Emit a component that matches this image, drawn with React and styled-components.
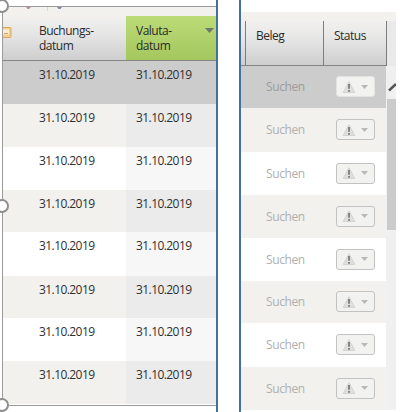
import React from 'react';
import styled, {createGlobalStyle} from 'styled-components';

const GlobalStyle = createGlobalStyle`
    * {
        box-sizing: border-box;
    }

    body {
        margin: 0;
        background: #fff;
        font-family: 'Open Sans', 'Noto Sans', sans-serif;
        font-size: 12px;
        color: #303030;
    }
`;

const Page = styled.main`
    display: flex;
    width: 400px;
    height: 412px;
    overflow: hidden;
`;

const LeftPane = styled.section`
    position: relative;
    width: 218px;
    height: 412px;
    padding: 6px 0 0 2px;
    border-right: 2px solid #41719c;
`;

const Selection = styled.div`
    height: 400px;
    overflow: hidden;
    border: solid #9b9b9b;
    border-width: 1px 0 1px 1px;
`;

const Handle = styled.span`
    position: absolute;
    left: -5px;
    top: ${({$top}) => $top}px;
    width: 14px;
    height: 14px;
    border: 2px solid #8f8f8f;
    border-radius: 50%;
    background: #fff;
`;

const Toolbar = styled.div`
    height: 9px;
    padding-left: 22px;
    background: #f2f1ee;

    svg {
        display: block;
    }
`;

const HeaderRow = styled.div`
    display: flex;
    width: ${({$width}) => ($width ? `${$width}px` : 'auto')};
    height: 45px;
    border-bottom: 1px solid #858585;
    background: linear-gradient(#f2f1f0, #e4e4e4 45%, #cecece);
`;

const HeaderCell = styled.div`
    display: flex;
    flex-shrink: 0;
    justify-content: space-between;
    width: ${({$width}) => $width}px;
    padding: ${({$pad}) => $pad};
    line-height: 15px;
    white-space: pre-line;
    letter-spacing: -0.5px;
    color: #2b2b2b;
    background: ${({$sorted}) => ($sorted ? 'linear-gradient(#badb76, #a5c75f)' : 'none')};
    border-right: ${({$line}) => ($line ? '1px solid #7d7d7d' : 'none')};
`;

const IconCell = styled.div`
    width: 36px;
    padding-top: 9px;
`;

const SortArrow = styled.svg`
    flex-shrink: 0;
    margin: 5px 2px 0 0;
`;

const DateRow = styled.div`
    display: flex;
    height: ${({$height}) => $height}px;
    background: ${({$color}) => $color};
`;

const DateCell = styled.div`
    width: ${({$width}) => $width}px;
    padding: 6px 0 0 ${({$left}) => $left}px;
    line-height: 16px;
    letter-spacing: -0.57px;
    background: ${({$color}) => $color};
`;

const RightPane = styled.section`
    width: 157px;
    height: 412px;
    margin-left: 21px;
    padding-top: 12px;
    border-left: 2px solid #41719c;
`;

const Strip = styled.div`
    height: 9px;
    background: #f2f1ee;
`;

const HeaderLine = styled.div`
    display: flex;
`;

const HeaderEnd = styled.div`
    width: 10px;
    height: 45px;
    border-left: 1px solid #7d7d7d;
    background: #e9e9e9;
`;

const Body = styled.div`
    display: flex;
`;

const Rows = styled.div`
    width: 145px;
`;

const StatusRow = styled.div`
    display: flex;
    align-items: center;
    justify-content: space-between;
    height: ${({$height}) => $height}px;
    padding: 0 11px 1px 25px;
    letter-spacing: -0.4px;
    color: ${({$selected}) => ($selected ? '#9c9c9c' : '#b0b0b0')};
    background: ${({$color}) => $color};
`;

const StatusButton = styled.button`
    display: flex;
    align-items: center;
    justify-content: space-between;
    width: 39px;
    height: 21px;
    padding: 0 6px 0 5px;
    border: 1px solid ${({$selected}) => ($selected ? '#e3e3e3' : '#c2c2c2')};
    border-radius: 3px;
    background: #f2f2f1;
`;

const Scrollbar = styled.div`
    width: 10px;
    padding-left: 1px;
    background: #f0f0f0;
`;

const ScrollUp = styled.div`
    height: 33px;
    padding-top: 16px;
    overflow: hidden;

    svg {
        display: block;
    }
`;

const Thumb = styled.div`
    height: 131px;
    background: #cbcbcb;
`;

const DATE = '31.10.2019';

const leftRows = [43, 43, 43, 42, 44, 42, 43, 43];
const rightRows = [42, 44, 43, 43, 43, 42, 44, 43];

const rowColor = index => {
    if (index === 0) {
        return '#cccccc';
    }
    return index % 2 ? '#f2f1ee' : '#fff';
};

const sortedColor = index => {
    if (index === 0) {
        return '#cccccc';
    }
    return index % 2 ? '#ebebeb' : '#f7f7f7';
};

const NoteIcon = () => (
    <svg width="9" height="11" viewBox="0 0 9 11">
        <rect x="-3" y="0.5" width="11" height="10" rx="1" fill="#f3cf91" stroke="#dfa45c" />
        <rect x="-1" y="2.5" width="7" height="5" fill="#fff0d3" />
        <path d="M1 6.5 H5" fill="none" stroke="#d59b60" />
    </svg>
);

const Warning = () => (
    <svg width="14" height="14" viewBox="0 0 14 14">
        <path d="M7 1.7 L12.8 12.5 H1.2 Z" fill="#dfdfdf" stroke="#d3d3d3" strokeLinejoin="round" />
        <path d="M7 4 V8.8 M7 10 V11.7" stroke="#6f6f6f" strokeWidth="1.6" />
    </svg>
);

const Caret = () => (
    <svg width="7" height="4" viewBox="0 0 7 4">
        <path d="M0 0 H7 L3.5 4 Z" fill="#b8b8b8" />
    </svg>
);

const App = () => (
    <Page>
        <GlobalStyle />
        <LeftPane>
            <Selection>
                <Toolbar>
                    <svg width="50" height="6" viewBox="0 0 50 6">
                        <path d="M1 0 H6 L4 2 H2.5 Z" fill="#b88f98" />
                        <path d="M22.5 0 V4" stroke="#d5d5d5" />
                        <path d="M32 0 H37 L35.5 2 H33.5 Z" fill="#7c8ca3" />
                    </svg>
                </Toolbar>
                <HeaderRow>
                    <IconCell>
                        <NoteIcon />
                    </IconCell>
                    <HeaderCell $width={87} $pad="7px 0 0">{'Buchungs-\ndatum'}</HeaderCell>
                    <HeaderCell $width={90} $pad="7px 0 0 10px" $sorted>
                        {'Valuta-\ndatum'}
                        <SortArrow width="9" height="5" viewBox="0 0 9 5">
                            <path d="M0 0 H9 L4.5 5 Z" fill="#6e7671" />
                        </SortArrow>
                    </HeaderCell>
                </HeaderRow>
                {leftRows.map((height, index) => (
                    <DateRow key={index} $height={height} $color={rowColor(index)}>
                        <DateCell $width={123} $left={36}>{DATE}</DateCell>
                        <DateCell $width={90} $left={10} $color={sortedColor(index)}>{DATE}</DateCell>
                    </DateRow>
                ))}
            </Selection>
            <Handle $top={-1} />
            <Handle $top={199} />
            <Handle $top={398} />
        </LeftPane>
        <RightPane>
            <Strip />
            <HeaderLine>
                <HeaderRow $width={145}>
                    <HeaderCell $width={5} $pad="0" $line />
                    <HeaderCell $width={78} $pad="7px 0 0 10px" $line>Beleg</HeaderCell>
                    <HeaderCell $width={62} $pad="7px 0 0 10px">Status</HeaderCell>
                </HeaderRow>
                <HeaderEnd />
            </HeaderLine>
            <Body>
                <Rows>
                    {rightRows.map((height, index) => (
                        <StatusRow
                            key={index}
                            $height={height}
                            $color={rowColor(index)}
                            $selected={index === 0}
                        >
                            Suchen
                            <StatusButton $selected={index === 0}>
                                <Warning />
                                <Caret />
                            </StatusButton>
                        </StatusRow>
                    ))}
                </Rows>
                <Scrollbar>
                    <ScrollUp>
                        <svg width="9" height="10" viewBox="0 0 9 10">
                            <path d="M2 8.5 L9 2" fill="none" stroke="#555" strokeWidth="2.4" />
                        </svg>
                    </ScrollUp>
                    <Thumb />
                </Scrollbar>
            </Body>
        </RightPane>
    </Page>
);

export default App;
